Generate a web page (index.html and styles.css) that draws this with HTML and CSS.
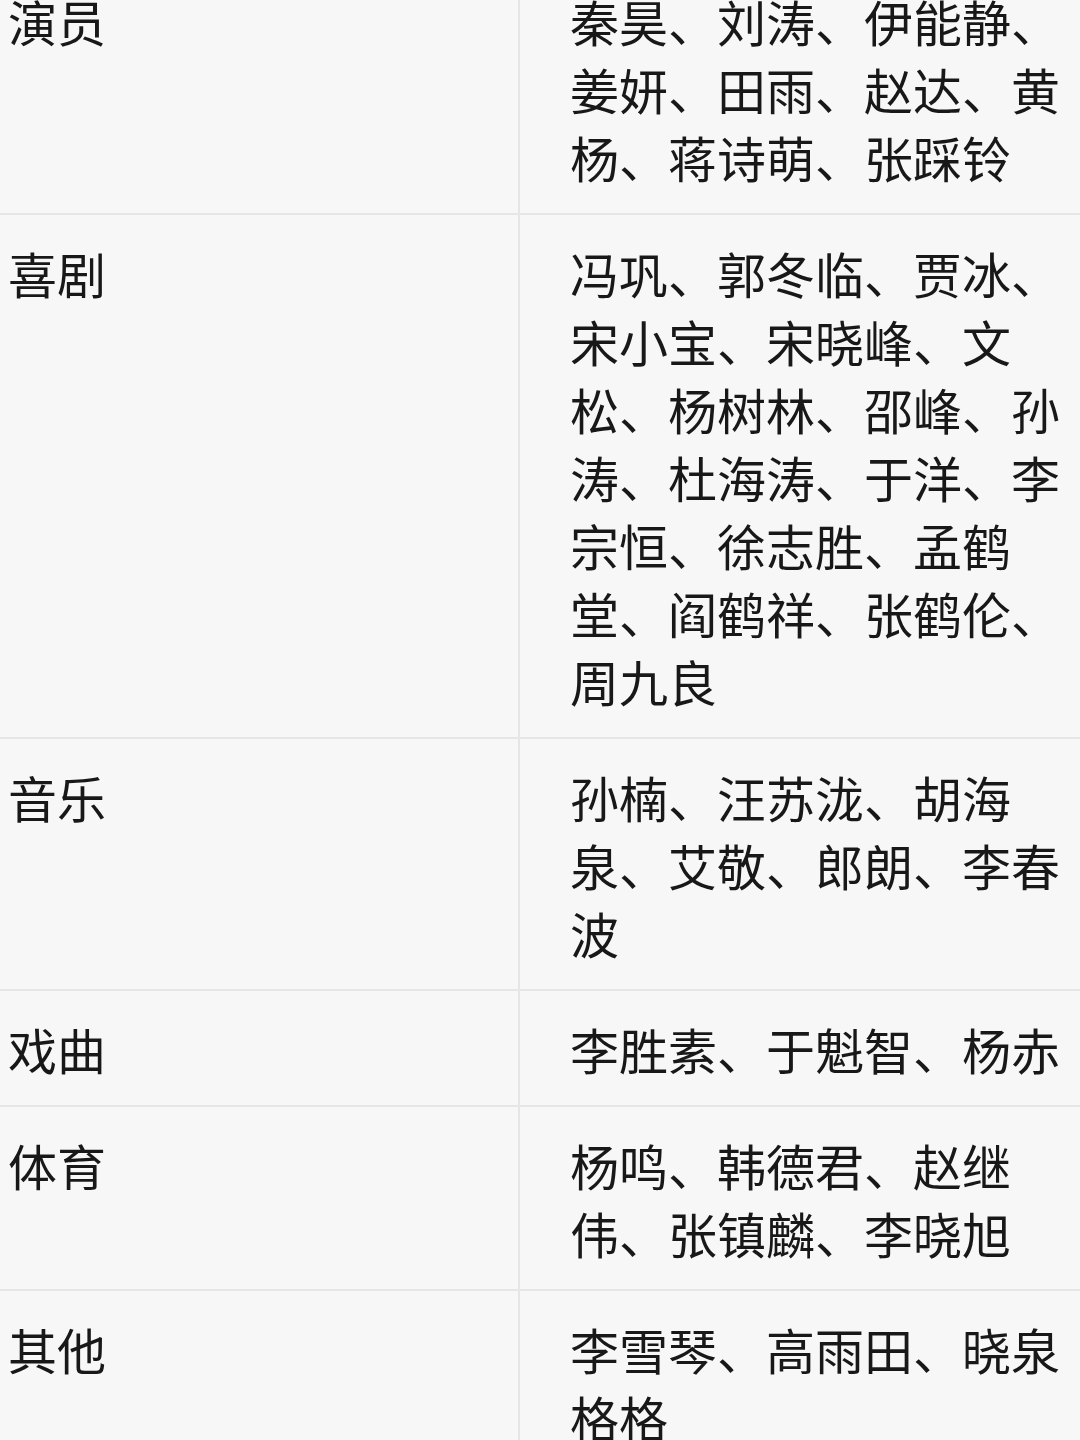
FILE: index.html
```html
<!DOCTYPE html>
<html lang="zh-CN">
<head>
<meta charset="utf-8">
<link rel="stylesheet" href="styles.css">
</head>
<body>
<table class="list">
  <tbody>
    <tr><td class="cat">演员</td><td class="names">秦昊、刘涛、伊能静、姜妍、田雨、赵达、黄杨、蒋诗萌、张踩铃</td></tr>
    <tr><td class="cat">喜剧</td><td class="names">冯巩、郭冬临、贾冰、宋小宝、宋晓峰、文松、杨树林、邵峰、孙涛、杜海涛、于洋、李宗恒、徐志胜、孟鹤堂、阎鹤祥、张鹤伦、周九良</td></tr>
    <tr><td class="cat">音乐</td><td class="names">孙楠、汪苏泷、胡海泉、艾敬、郎朗、李春波</td></tr>
    <tr><td class="cat">戏曲</td><td class="names">李胜素、于魁智、杨赤</td></tr>
    <tr><td class="cat">体育</td><td class="names">杨鸣、韩德君、赵继伟、张镇麟、李晓旭</td></tr>
    <tr><td class="cat">其他</td><td class="names">李雪琴、高雨田、晓泉格格</td></tr>
  </tbody>
</table>
</body>
</html>
```
FILE: styles.css
```css
html, body {
  margin: 0;
  padding: 0;
  background: #f7f7f7;
}
body {
  width: 1080px;
  overflow: hidden;
  font-family: "Noto Sans CJK SC", "Noto Sans", sans-serif;
  color: #181818;
}
.list {
  width: 1080px;
  border-collapse: collapse;
  table-layout: fixed;
  margin-top: -37px;
  font-size: 49px;
  line-height: 68px;
}
.list td {
  vertical-align: top;
  padding: 24px 10px 22px 8px;
  border-bottom: 2px solid #e6e6e6;
}
.list td.cat {
  width: 500px;
  border-right: 2px solid #e6e6e6;
}
.list td.names {
  padding-left: 50px;
}
```
